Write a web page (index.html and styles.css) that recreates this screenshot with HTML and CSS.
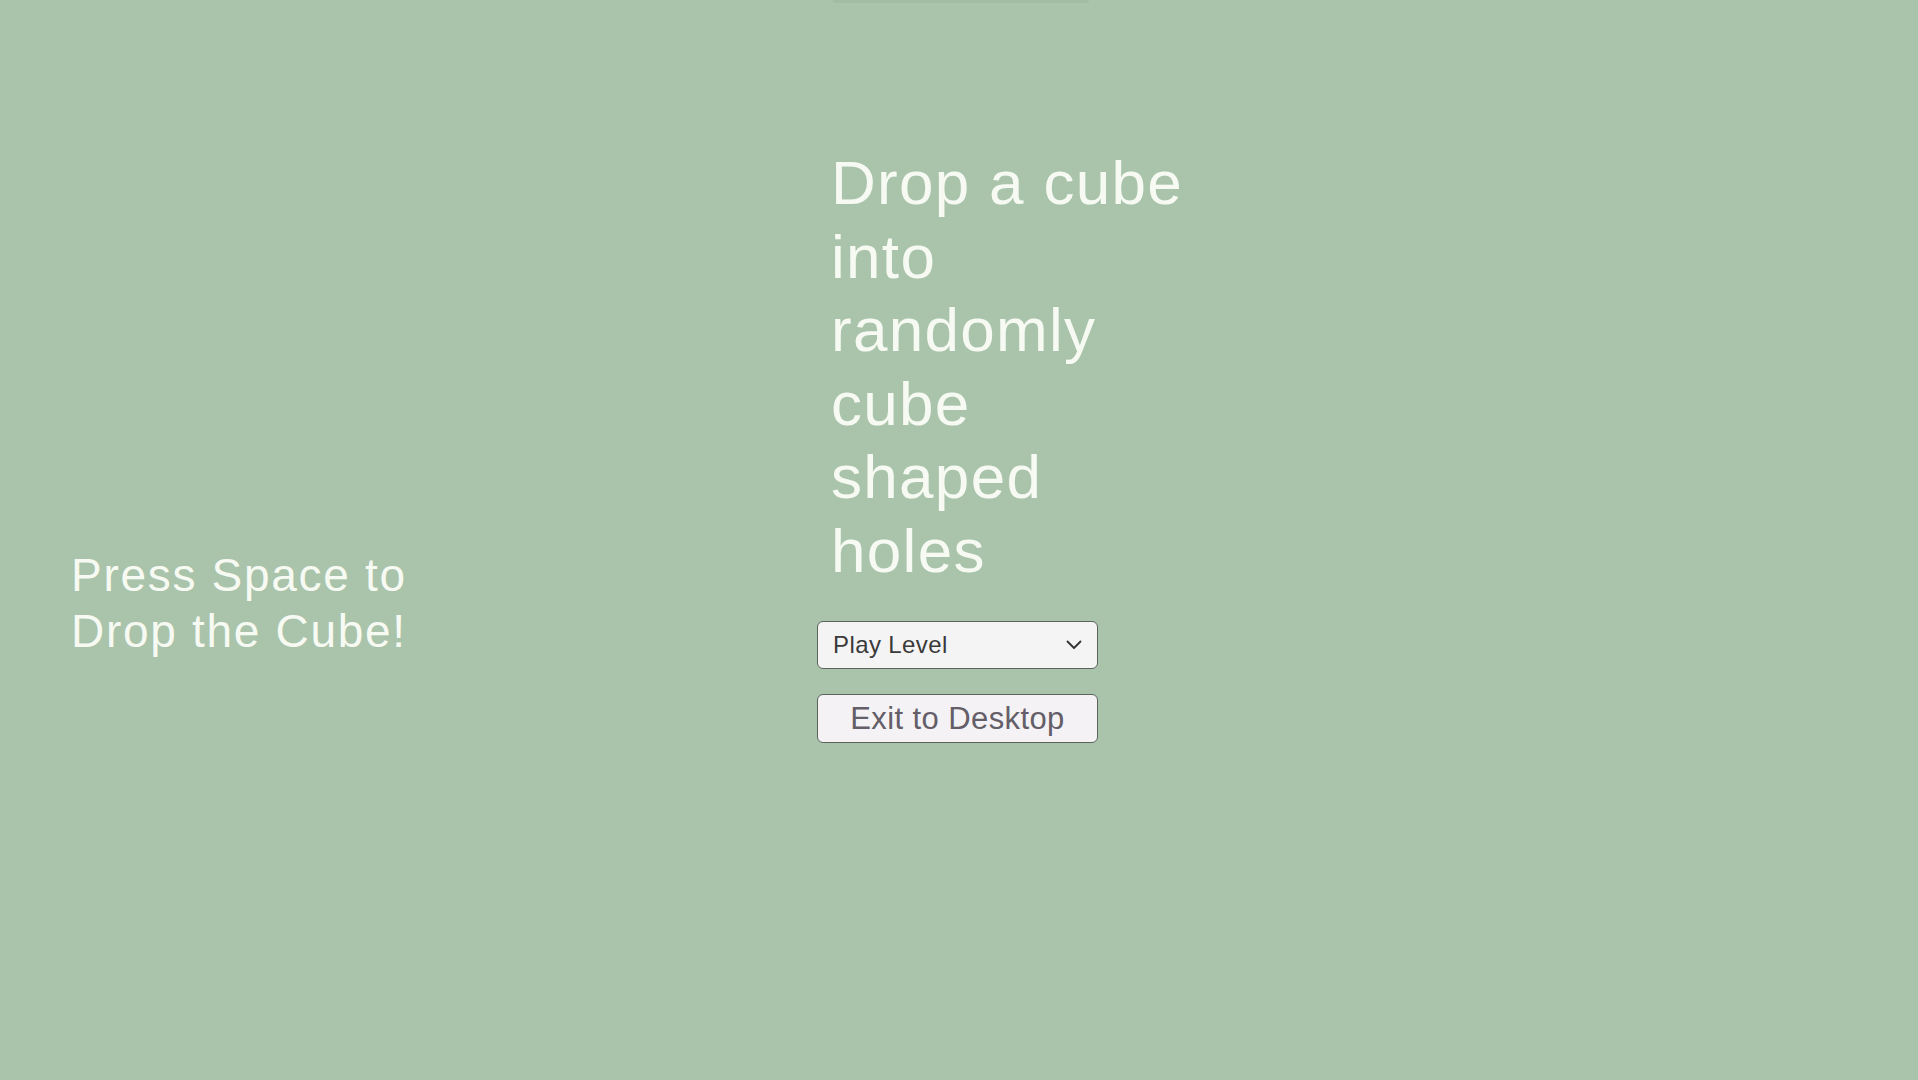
FILE: index.html
```html
<!DOCTYPE html>
<html lang="en">
<head>
  <meta charset="UTF-8">
  <meta name="viewport" content="width=device-width, initial-scale=1.0">
  <title>Cube Drop</title>
  <link rel="stylesheet" href="styles.css">
</head>
<body>
  <div class="screen">
    <!-- Left hint -->
    <div class="hint">
      <p>Press Space to<br>Drop the Cube!</p>
    </div>

    <!-- Main menu -->
    <div class="menu">
      <div class="menu-tab"></div>
      <h1 class="title">Drop a cube into randomly cube shaped holes</h1>
      <div class="level-select">
        <span>Play Level</span>
        <svg width="16" height="10" viewBox="0 0 16 10">
          <path d="M1.5 1.5 L8 8 L14.5 1.5" fill="none" stroke="#333" stroke-width="1.8" stroke-linecap="round" stroke-linejoin="round"/>
        </svg>
      </div>
      <button class="exit-btn">Exit to Desktop</button>
    </div>

    <div></div>
  </div>
</body>
</html>
```

FILE: styles.css
```css
* { margin: 0; padding: 0; box-sizing: border-box; }

body {
  background: #a9c4ab;
  font-family: "Liberation Sans", Arial, sans-serif;
  color: #f7faf2;
  overflow: hidden;
}

.screen {
  display: grid;
  grid-template-columns: 817px 281px 1fr;
  height: 100vh;
}

.hint {
  padding: 548px 0 0 71px;
}
.hint p {
  font-size: 46px;
  line-height: 1.21;
  letter-spacing: 1.7px;
}

.menu {
  display: flex;
  flex-direction: column;
}

.menu-tab {
  height: 3px;
  margin: 0 9px 0 16px;
  background: #a1bca3;
  border-radius: 0 0 3px 3px;
}

.title {
  margin: 143px 0 0 14px;
  width: 360px;
  font-size: 62px;
  font-weight: normal;
  line-height: 73.5px;
  letter-spacing: 1.3px;
}

.level-select {
  margin-top: 34px;
  height: 48px;
  display: flex;
  align-items: center;
  justify-content: space-between;
  padding: 0 15px 0 15px;
  background: #f5f4f5;
  border: 1px solid #5a645d;
  border-radius: 6px;
  color: #3a3a3a;
  font-size: 24px;
  letter-spacing: 0.4px;
}

.exit-btn {
  margin-top: 25px;
  height: 49px;
  background: #f4f2f4;
  border: 1px solid #5a645d;
  border-radius: 6px;
  color: #645e68;
  font-family: inherit;
  font-size: 31px;
  letter-spacing: 0.4px;
  cursor: pointer;
}
```
